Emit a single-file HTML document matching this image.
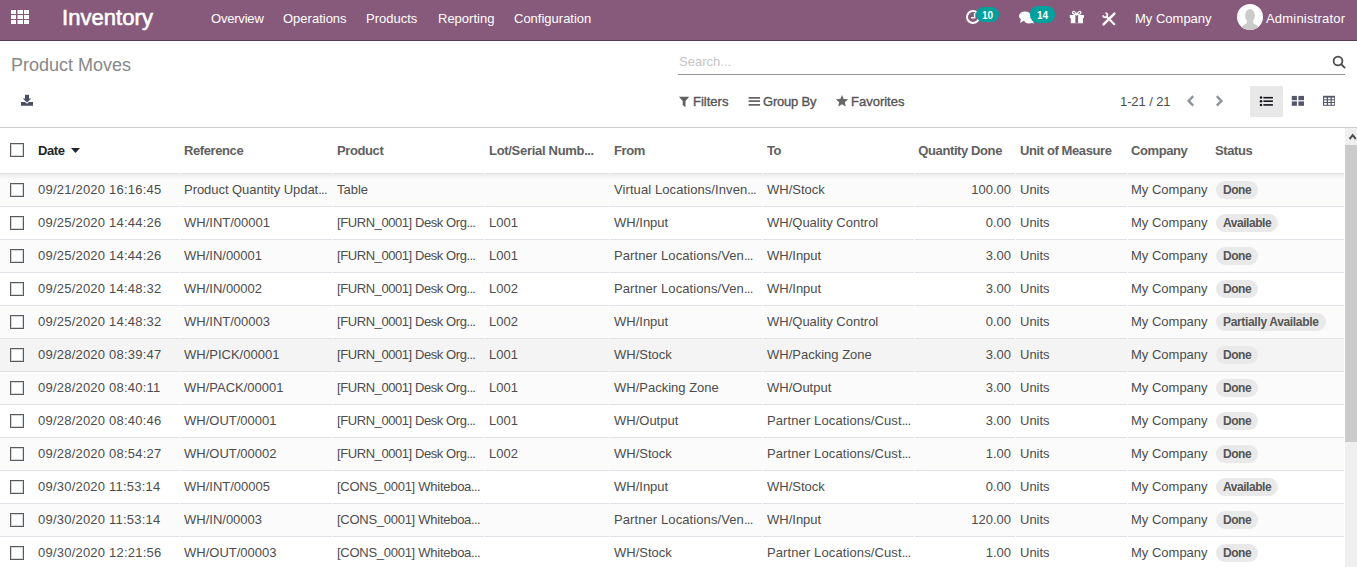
<!DOCTYPE html>
<html><head><meta charset="utf-8">
<style>
*{box-sizing:border-box}
html,body{margin:0;padding:0;width:1357px;height:567px;overflow:hidden;background:#fff;font-family:"Liberation Sans",sans-serif;font-size:13px;color:#4c4c4c}
svg{position:absolute;display:block}
.abs{position:absolute;white-space:nowrap}
#nav{position:absolute;left:0;top:0;width:1357px;height:41px;background:#875A7B;border-bottom:1px solid #5f3b55;color:#fff}
#nav .t{position:absolute;top:0;line-height:38px;white-space:nowrap}
.nbadge{position:absolute;height:15px;border-radius:8px;background:#00A09D;color:#fff;font-size:10px;font-weight:700;line-height:16px;text-align:center}
#cp{position:absolute;left:0;top:41px;width:1357px;height:87px;border-bottom:1px solid #cbcbcb}
.cpt{position:absolute;white-space:nowrap;line-height:16px;color:#4c4c4c}
.bt{color:#555;-webkit-text-stroke:0.35px #555}
#thead{position:absolute;left:0;top:128px;width:1344px;height:45px;background:#fff}
.th{position:absolute;top:15px;line-height:16px;font-weight:700;white-space:nowrap;letter-spacing:-0.4px;color:#606060}
.th.sorted{color:#212529}
.row{position:absolute;left:0;width:1344px;height:33px;border-top:1px solid #dee2e6;background:#fff}
.row.odd{background:#fbfbfb}
.row.hover{background:#f4f4f4}
.row.first{background:linear-gradient(#eeeeee,#fbfbfb 6px)}
.td{position:absolute;top:8px;line-height:16px;white-space:nowrap}
.el{letter-spacing:-0.7px}
.badge{position:absolute;top:7px;height:18px;line-height:18px;padding:0 7px;border-radius:9px;background:#e9e9e9;font-size:12px;font-weight:700;letter-spacing:-0.45px;color:#555;white-space:nowrap}
.cb{position:absolute;width:14px;height:14px;border:1.5px solid #5a5a5a;background:#fff;box-shadow:inset 0 0 0 1px #d0d8de;border-radius:0}
.gap{position:absolute;top:-1px;width:1px;height:1px;background:#fff}
#sb{position:absolute;left:1345px;top:128px;width:12px;height:439px;background:#efefef}
</style></head><body>
<div id="nav">
  <svg width="40" height="40" style="left:0;top:0"><g fill="#fff"><rect x="11" y="10" width="5" height="4"/><rect x="17.5" y="10" width="5.5" height="4"/><rect x="24" y="10" width="5" height="4"/><rect x="11" y="15" width="5" height="4"/><rect x="17.5" y="15" width="5.5" height="4"/><rect x="24" y="15" width="5" height="4"/><rect x="11" y="20" width="5" height="4"/><rect x="17.5" y="20" width="5.5" height="4"/><rect x="24" y="20" width="5" height="4"/></g></svg>
  <div class="t" style="left:62px;font-size:22px;letter-spacing:0.05px;-webkit-text-stroke:0.6px #fff;line-height:36px">Inventory</div>
  <div class="t" style="left:211px;letter-spacing:-0.2px">Overview</div>
  <div class="t" style="left:283px">Operations</div>
  <div class="t" style="left:366px">Products</div>
  <div class="t" style="left:438px">Reporting</div>
  <div class="t" style="left:514px">Configuration</div>
  <!-- clock -->
  <svg width="20" height="20" style="left:963px;top:7px"><circle cx="10" cy="10" r="6" fill="none" stroke="#fff" stroke-width="2"/><path d="M11.6 6V10.8H8" fill="none" stroke="#fff" stroke-width="1.4"/></svg>
  <div class="nbadge" style="left:976px;top:7px;width:23px;line-height:17px">10</div>
  <!-- comments -->
  <svg width="20" height="20" style="left:1017px;top:8px"><ellipse cx="8" cy="8" rx="6" ry="4.5" fill="#fff"/><path d="M4 11L3 15L8 12Z" fill="#fff"/><ellipse cx="12" cy="12" rx="5" ry="3.5" fill="#fff"/><path d="M14 14L17 16L15 12Z" fill="#fff"/></svg>
  <div class="nbadge" style="left:1030px;top:6px;width:25px;height:17px;line-height:19px">14</div>
  <!-- gift -->
  <svg width="24" height="24" style="left:1065px;top:5px"><path d="M4.8 10H18.9V12.9H18V18.2H5.8V12.9H4.8Z" fill="#fff"/><rect x="10.4" y="10" width="2.7" height="8.2" fill="#875A7B"/><path d="M11.75 9.6C10.5 6.2 7.6 5.4 7.6 7.6C7.6 9.3 10 9.6 11.75 9.6C13.5 9.6 15.9 9.3 15.9 7.6C15.9 5.4 13 6.2 11.75 9.6Z" fill="none" stroke="#fff" stroke-width="1.2"/></svg>
  <!-- tools -->
  <svg width="20" height="20" style="left:1100px;top:10px"><path d="M14.4 3.6L3.6 14.4" stroke="#fff" stroke-width="2.4" stroke-linecap="round"/><path d="M6.5 6.5L14.3 14.3" stroke="#fff" stroke-width="2" stroke-linecap="round"/><path d="M3.01 5.39A2.2 2.2 0 1 0 5.39 3.01" fill="none" stroke="#fff" stroke-width="1.7"/></svg>
  <div class="t" style="left:1135px">My Company</div>
  <svg width="28" height="28" style="left:1236px;top:3px"><defs><clipPath id="av"><circle cx="14" cy="14" r="13"/></clipPath></defs><circle cx="14" cy="14" r="13" fill="#fff"/><g clip-path="url(#av)" fill="#cbcbcb"><ellipse cx="14" cy="12.6" rx="4.9" ry="6.6"/><path d="M11.5 16H16.5L17.5 21H10.5Z"/><ellipse cx="14" cy="27.6" rx="9.6" ry="7.6"/></g></svg>
  <div class="t" style="left:1266px;letter-spacing:0.2px">Administrator</div>
</div>
<div id="cp">
  <div class="abs" style="left:11px;top:13px;font-size:18px;line-height:22px;color:#888">Product Moves</div>
  <div class="abs" style="left:679px;top:13px;line-height:16px;color:#c4c4c4">Search...</div>
  <div class="abs" style="left:678px;top:33px;width:667px;height:1px;background:#929292"></div>
  
  <div class="cpt bt" style="left:693px;top:53px">Filters</div>
  <div class="cpt bt" style="left:763px;top:53px;letter-spacing:-0.2px">Group By</div>
  <div class="cpt bt" style="left:851px;top:53px">Favorites</div>
  <div class="cpt" style="left:1120px;top:53px;letter-spacing:-0.1px">1-21 / 21</div>
  <div class="abs" style="left:1250px;top:45px;width:33px;height:31px;background:#e8e8e8"></div>
  
  
  
</div>
<div id="thead"><div class="cb" style="left:10px;top:15px"></div><div class="th sorted" style="left:38px">Date</div><div class="th" style="left:184px">Reference</div><div class="th" style="left:337px">Product</div><div class="th" style="left:489px"><span style="letter-spacing:-0.3px">Lot/Serial Numb</span><span style="letter-spacing:-0.5px">...</span></div><div class="th" style="left:614px">From</div><div class="th" style="left:767px">To</div><div class="th" style="right:342px">Quantity Done</div><div class="th" style="left:1020px">Unit of Measure</div><div class="th" style="left:1131px">Company</div><div class="th" style="left:1215px">Status</div><svg class="caret" width="9" height="5" viewBox="0 0 9 5" style="left:71px;top:20px"><path d="M0 0H9L4.5 5Z" fill="#212529"/></svg></div>
<div class="row odd first" style="top:173px"><div class="cb" style="left:10px;top:9px"></div><div class="td" style="left:38px;letter-spacing:0.22px">09/21/2020 16:16:45</div><div class="td" style="left:184px"><span style="letter-spacing:-0.045px">Product Quantity Updat</span><span class="el">...</span></div><div class="td" style="left:337px">Table</div><div class="td" style="left:614px"><span style="letter-spacing:0.087px">Virtual Locations/Inven</span><span class="el">...</span></div><div class="td" style="left:767px">WH/Stock</div><div class="td" style="right:333px">100.00</div><div class="td" style="left:1020px">Units</div><div class="td" style="left:1131px">My Company</div><div class="badge" style="left:1216px">Done</div><div class="gap" style="left:179px"></div><div class="gap" style="left:332px"></div><div class="gap" style="left:484px"></div><div class="gap" style="left:609px"></div><div class="gap" style="left:762px"></div><div class="gap" style="left:914px"></div><div class="gap" style="left:1015px"></div><div class="gap" style="left:1127px"></div></div>
<div class="row" style="top:206px"><div class="cb" style="left:10px;top:9px"></div><div class="td" style="left:38px;letter-spacing:0.22px">09/25/2020 14:44:26</div><div class="td" style="left:184px">WH/INT/00001</div><div class="td" style="left:337px"><span style="letter-spacing:-0.425px">[FURN_0001] Desk Org</span><span class="el">...</span></div><div class="td" style="left:489px">L001</div><div class="td" style="left:614px">WH/Input</div><div class="td" style="left:767px">WH/Quality Control</div><div class="td" style="right:333px">0.00</div><div class="td" style="left:1020px">Units</div><div class="td" style="left:1131px">My Company</div><div class="badge" style="left:1216px">Available</div><div class="gap" style="left:179px"></div><div class="gap" style="left:332px"></div><div class="gap" style="left:484px"></div><div class="gap" style="left:609px"></div><div class="gap" style="left:762px"></div><div class="gap" style="left:914px"></div><div class="gap" style="left:1015px"></div><div class="gap" style="left:1127px"></div></div>
<div class="row odd" style="top:239px"><div class="cb" style="left:10px;top:9px"></div><div class="td" style="left:38px;letter-spacing:0.22px">09/25/2020 14:44:26</div><div class="td" style="left:184px">WH/IN/00001</div><div class="td" style="left:337px"><span style="letter-spacing:-0.425px">[FURN_0001] Desk Org</span><span class="el">...</span></div><div class="td" style="left:489px">L001</div><div class="td" style="left:614px"><span style="letter-spacing:0.095px">Partner Locations/Ven</span><span class="el">...</span></div><div class="td" style="left:767px">WH/Input</div><div class="td" style="right:333px">3.00</div><div class="td" style="left:1020px">Units</div><div class="td" style="left:1131px">My Company</div><div class="badge" style="left:1216px">Done</div><div class="gap" style="left:179px"></div><div class="gap" style="left:332px"></div><div class="gap" style="left:484px"></div><div class="gap" style="left:609px"></div><div class="gap" style="left:762px"></div><div class="gap" style="left:914px"></div><div class="gap" style="left:1015px"></div><div class="gap" style="left:1127px"></div></div>
<div class="row" style="top:272px"><div class="cb" style="left:10px;top:9px"></div><div class="td" style="left:38px;letter-spacing:0.22px">09/25/2020 14:48:32</div><div class="td" style="left:184px">WH/IN/00002</div><div class="td" style="left:337px"><span style="letter-spacing:-0.425px">[FURN_0001] Desk Org</span><span class="el">...</span></div><div class="td" style="left:489px">L002</div><div class="td" style="left:614px"><span style="letter-spacing:0.095px">Partner Locations/Ven</span><span class="el">...</span></div><div class="td" style="left:767px">WH/Input</div><div class="td" style="right:333px">3.00</div><div class="td" style="left:1020px">Units</div><div class="td" style="left:1131px">My Company</div><div class="badge" style="left:1216px">Done</div><div class="gap" style="left:179px"></div><div class="gap" style="left:332px"></div><div class="gap" style="left:484px"></div><div class="gap" style="left:609px"></div><div class="gap" style="left:762px"></div><div class="gap" style="left:914px"></div><div class="gap" style="left:1015px"></div><div class="gap" style="left:1127px"></div></div>
<div class="row odd" style="top:305px"><div class="cb" style="left:10px;top:9px"></div><div class="td" style="left:38px;letter-spacing:0.22px">09/25/2020 14:48:32</div><div class="td" style="left:184px">WH/INT/00003</div><div class="td" style="left:337px"><span style="letter-spacing:-0.425px">[FURN_0001] Desk Org</span><span class="el">...</span></div><div class="td" style="left:489px">L002</div><div class="td" style="left:614px">WH/Input</div><div class="td" style="left:767px">WH/Quality Control</div><div class="td" style="right:333px">0.00</div><div class="td" style="left:1020px">Units</div><div class="td" style="left:1131px">My Company</div><div class="badge" style="left:1216px;letter-spacing:-0.33px">Partially Available</div><div class="gap" style="left:179px"></div><div class="gap" style="left:332px"></div><div class="gap" style="left:484px"></div><div class="gap" style="left:609px"></div><div class="gap" style="left:762px"></div><div class="gap" style="left:914px"></div><div class="gap" style="left:1015px"></div><div class="gap" style="left:1127px"></div></div>
<div class="row hover" style="top:338px"><div class="cb" style="left:10px;top:9px"></div><div class="td" style="left:38px;letter-spacing:0.22px">09/28/2020 08:39:47</div><div class="td" style="left:184px">WH/PICK/00001</div><div class="td" style="left:337px"><span style="letter-spacing:-0.425px">[FURN_0001] Desk Org</span><span class="el">...</span></div><div class="td" style="left:489px">L001</div><div class="td" style="left:614px">WH/Stock</div><div class="td" style="left:767px">WH/Packing Zone</div><div class="td" style="right:333px">3.00</div><div class="td" style="left:1020px">Units</div><div class="td" style="left:1131px">My Company</div><div class="badge" style="left:1216px">Done</div><div class="gap" style="left:179px"></div><div class="gap" style="left:332px"></div><div class="gap" style="left:484px"></div><div class="gap" style="left:609px"></div><div class="gap" style="left:762px"></div><div class="gap" style="left:914px"></div><div class="gap" style="left:1015px"></div><div class="gap" style="left:1127px"></div></div>
<div class="row odd" style="top:371px"><div class="cb" style="left:10px;top:9px"></div><div class="td" style="left:38px;letter-spacing:0.22px">09/28/2020 08:40:11</div><div class="td" style="left:184px">WH/PACK/00001</div><div class="td" style="left:337px"><span style="letter-spacing:-0.425px">[FURN_0001] Desk Org</span><span class="el">...</span></div><div class="td" style="left:489px">L001</div><div class="td" style="left:614px">WH/Packing Zone</div><div class="td" style="left:767px">WH/Output</div><div class="td" style="right:333px">3.00</div><div class="td" style="left:1020px">Units</div><div class="td" style="left:1131px">My Company</div><div class="badge" style="left:1216px">Done</div><div class="gap" style="left:179px"></div><div class="gap" style="left:332px"></div><div class="gap" style="left:484px"></div><div class="gap" style="left:609px"></div><div class="gap" style="left:762px"></div><div class="gap" style="left:914px"></div><div class="gap" style="left:1015px"></div><div class="gap" style="left:1127px"></div></div>
<div class="row" style="top:404px"><div class="cb" style="left:10px;top:9px"></div><div class="td" style="left:38px;letter-spacing:0.22px">09/28/2020 08:40:46</div><div class="td" style="left:184px">WH/OUT/00001</div><div class="td" style="left:337px"><span style="letter-spacing:-0.425px">[FURN_0001] Desk Org</span><span class="el">...</span></div><div class="td" style="left:489px">L001</div><div class="td" style="left:614px">WH/Output</div><div class="td" style="left:767px"><span style="letter-spacing:0.109px">Partner Locations/Cust</span><span class="el">...</span></div><div class="td" style="right:333px">3.00</div><div class="td" style="left:1020px">Units</div><div class="td" style="left:1131px">My Company</div><div class="badge" style="left:1216px">Done</div><div class="gap" style="left:179px"></div><div class="gap" style="left:332px"></div><div class="gap" style="left:484px"></div><div class="gap" style="left:609px"></div><div class="gap" style="left:762px"></div><div class="gap" style="left:914px"></div><div class="gap" style="left:1015px"></div><div class="gap" style="left:1127px"></div></div>
<div class="row odd" style="top:437px"><div class="cb" style="left:10px;top:9px"></div><div class="td" style="left:38px;letter-spacing:0.22px">09/28/2020 08:54:27</div><div class="td" style="left:184px">WH/OUT/00002</div><div class="td" style="left:337px"><span style="letter-spacing:-0.425px">[FURN_0001] Desk Org</span><span class="el">...</span></div><div class="td" style="left:489px">L002</div><div class="td" style="left:614px">WH/Stock</div><div class="td" style="left:767px"><span style="letter-spacing:0.109px">Partner Locations/Cust</span><span class="el">...</span></div><div class="td" style="right:333px">1.00</div><div class="td" style="left:1020px">Units</div><div class="td" style="left:1131px">My Company</div><div class="badge" style="left:1216px">Done</div><div class="gap" style="left:179px"></div><div class="gap" style="left:332px"></div><div class="gap" style="left:484px"></div><div class="gap" style="left:609px"></div><div class="gap" style="left:762px"></div><div class="gap" style="left:914px"></div><div class="gap" style="left:1015px"></div><div class="gap" style="left:1127px"></div></div>
<div class="row" style="top:470px"><div class="cb" style="left:10px;top:9px"></div><div class="td" style="left:38px;letter-spacing:0.22px">09/30/2020 11:53:14</div><div class="td" style="left:184px">WH/INT/00005</div><div class="td" style="left:337px"><span style="letter-spacing:-0.27px">[CONS_0001] Whiteboa</span><span class="el">...</span></div><div class="td" style="left:614px">WH/Input</div><div class="td" style="left:767px">WH/Stock</div><div class="td" style="right:333px">0.00</div><div class="td" style="left:1020px">Units</div><div class="td" style="left:1131px">My Company</div><div class="badge" style="left:1216px">Available</div><div class="gap" style="left:179px"></div><div class="gap" style="left:332px"></div><div class="gap" style="left:484px"></div><div class="gap" style="left:609px"></div><div class="gap" style="left:762px"></div><div class="gap" style="left:914px"></div><div class="gap" style="left:1015px"></div><div class="gap" style="left:1127px"></div></div>
<div class="row odd" style="top:503px"><div class="cb" style="left:10px;top:9px"></div><div class="td" style="left:38px;letter-spacing:0.22px">09/30/2020 11:53:14</div><div class="td" style="left:184px">WH/IN/00003</div><div class="td" style="left:337px"><span style="letter-spacing:-0.27px">[CONS_0001] Whiteboa</span><span class="el">...</span></div><div class="td" style="left:614px"><span style="letter-spacing:0.095px">Partner Locations/Ven</span><span class="el">...</span></div><div class="td" style="left:767px">WH/Input</div><div class="td" style="right:333px">120.00</div><div class="td" style="left:1020px">Units</div><div class="td" style="left:1131px">My Company</div><div class="badge" style="left:1216px">Done</div><div class="gap" style="left:179px"></div><div class="gap" style="left:332px"></div><div class="gap" style="left:484px"></div><div class="gap" style="left:609px"></div><div class="gap" style="left:762px"></div><div class="gap" style="left:914px"></div><div class="gap" style="left:1015px"></div><div class="gap" style="left:1127px"></div></div>
<div class="row" style="top:536px"><div class="cb" style="left:10px;top:9px"></div><div class="td" style="left:38px;letter-spacing:0.22px">09/30/2020 12:21:56</div><div class="td" style="left:184px">WH/OUT/00003</div><div class="td" style="left:337px"><span style="letter-spacing:-0.27px">[CONS_0001] Whiteboa</span><span class="el">...</span></div><div class="td" style="left:614px">WH/Stock</div><div class="td" style="left:767px"><span style="letter-spacing:0.109px">Partner Locations/Cust</span><span class="el">...</span></div><div class="td" style="right:333px">1.00</div><div class="td" style="left:1020px">Units</div><div class="td" style="left:1131px">My Company</div><div class="badge" style="left:1216px">Done</div><div class="gap" style="left:179px"></div><div class="gap" style="left:332px"></div><div class="gap" style="left:484px"></div><div class="gap" style="left:609px"></div><div class="gap" style="left:762px"></div><div class="gap" style="left:914px"></div><div class="gap" style="left:1015px"></div><div class="gap" style="left:1127px"></div></div>
<svg id="ov" width="1357" height="567" style="left:0;top:0;z-index:5;pointer-events:none">
<g fill="#4a4e62" transform="translate(16,90)"><rect x="9" y="4.8" width="4" height="4.2"/><path d="M6.8 8.5H15.2L11 12.6Z"/><path d="M5 12H9L11 13.8L13 12H17V15.7H5Z"/></g>
<circle cx="1338" cy="61" r="4.4" fill="none" stroke="#4c4c4c" stroke-width="1.8"/><path d="M1341.2 64.2L1344.6 67.6" stroke="#4c4c4c" stroke-width="1.9" stroke-linecap="round"/>
<path transform="translate(679,96)" d="M-0.1 0.7H10.2L6.5 4.9V11.2L3.7 8.9V4.9Z" fill="#606060"/>
<path d="M748.6 97.8H760M748.6 101.1H760M748.6 104.8H760" stroke="#666" stroke-width="1.8"/>
<path d="M842.00 94.90 L843.73 98.98 L848.15 99.37 L844.81 102.28 L845.80 106.60 L842.00 104.32 L838.20 106.60 L839.19 102.28 L835.85 99.37 L840.27 98.98Z" fill="#666"/>
<path d="M1193.2 96.2L1188.6 100.9L1193.2 105.6" fill="none" stroke="#8f949e" stroke-width="2.4"/>
<path d="M1216.8 96.2L1221.4 100.9L1216.8 105.6" fill="none" stroke="#8f949e" stroke-width="2.4"/>
<g fill="#14141f"><circle cx="1261" cy="97.6" r="1.25"/><circle cx="1261" cy="101.2" r="1.25"/><circle cx="1261" cy="104.9" r="1.25"/><rect x="1263.4" y="96.9" width="9.5" height="1.6"/><rect x="1263.4" y="100.4" width="9.5" height="1.6"/><rect x="1263.4" y="104.1" width="9.5" height="1.6"/></g>
<g fill="#54566a"><rect x="1291.8" y="95.9" width="5.1" height="4.3"/><rect x="1298.4" y="95.9" width="5.6" height="4.3"/><rect x="1291.8" y="101.4" width="5.1" height="4.4"/><rect x="1298.4" y="101.4" width="5.6" height="4.4"/></g>
<rect x="1323" y="95.8" width="12" height="10" fill="#54566a"/><g fill="#fff"><rect x="1324.1" y="97.6" width="2.6" height="1.7"/><rect x="1324.1" y="100.3" width="2.6" height="1.7"/><rect x="1324.1" y="103" width="2.6" height="1.8"/><rect x="1328" y="97.6" width="2.6" height="1.7"/><rect x="1328" y="100.3" width="2.6" height="1.7"/><rect x="1328" y="103" width="2.6" height="1.8"/><rect x="1331.8" y="97.6" width="2.4" height="1.7"/><rect x="1331.8" y="100.3" width="2.4" height="1.7"/><rect x="1331.8" y="103" width="2.4" height="1.8"/></g>
</svg>
<div id="sb">
  <svg width="12" height="16" style="left:0;top:0"><path d="M4.6 11L7.7 7.2L10.8 11" fill="none" stroke="#505050" stroke-width="2"/></svg>
  <div class="abs" style="left:0;top:17px;width:12px;height:297px;background:#cbcbcb"></div>
</div>
</body></html>
